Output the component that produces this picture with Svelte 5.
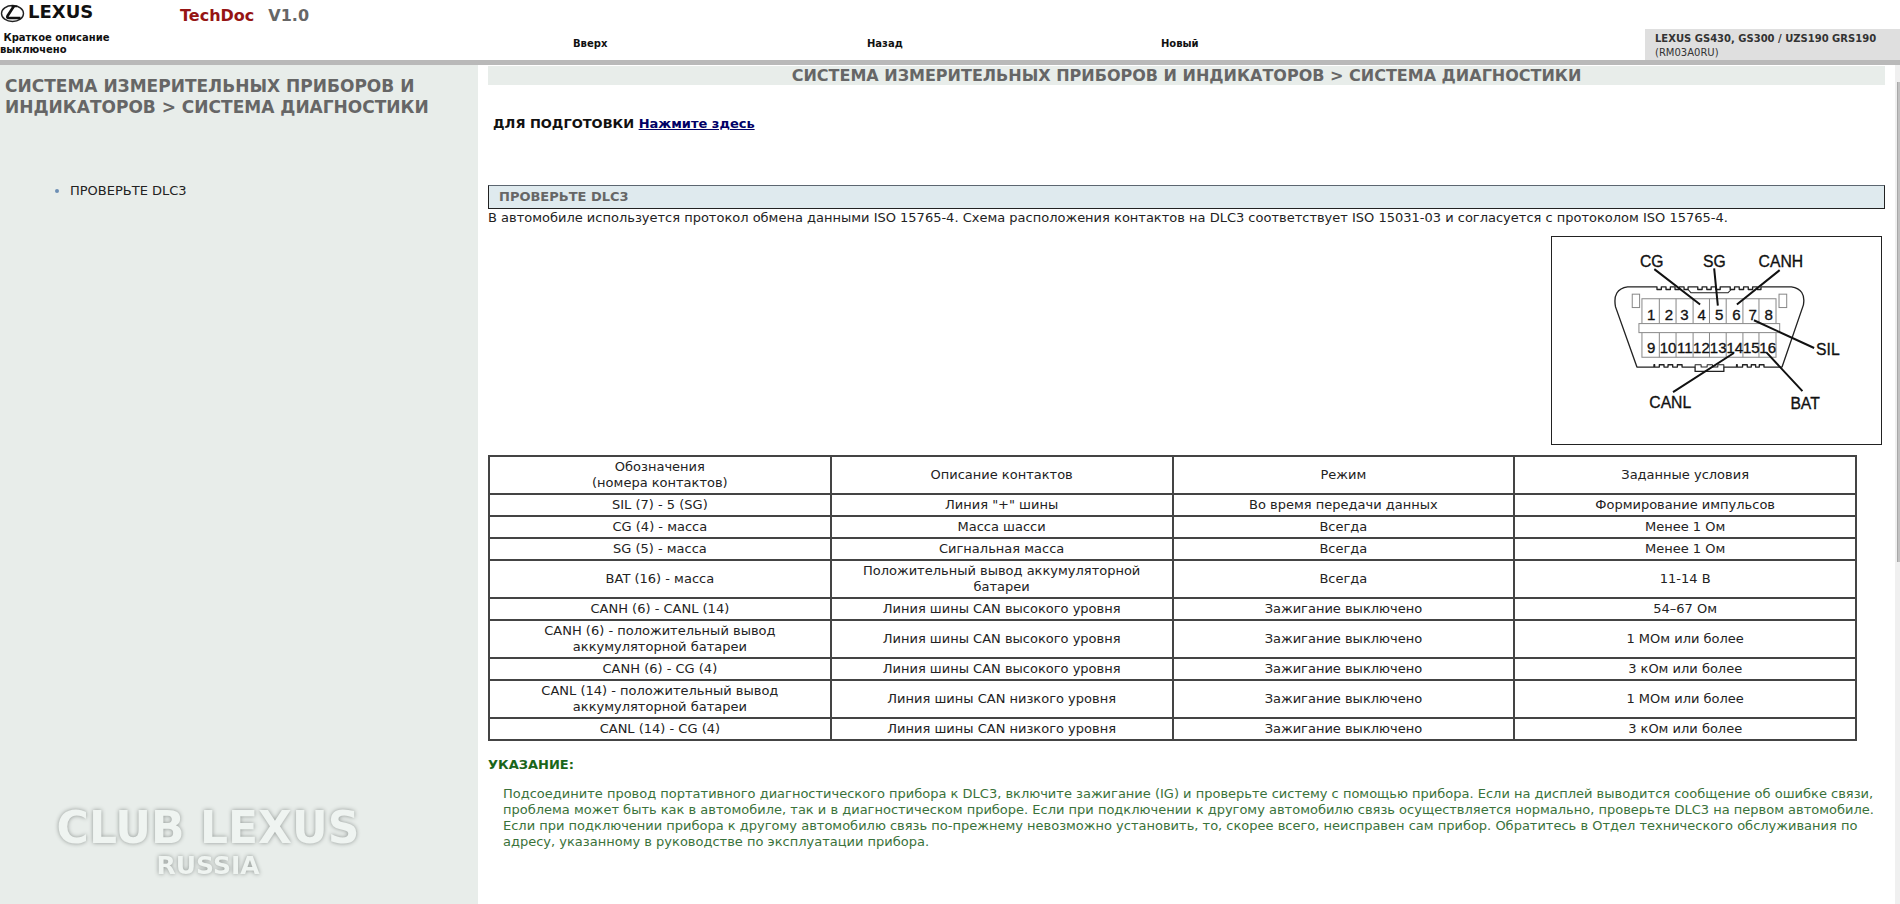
<script>
  const nav = ['Вверх', 'Назад', 'Новый'];
  const title = 'СИСТЕМА ИЗМЕРИТЕЛЬНЫХ ПРИБОРОВ И ИНДИКАТОРОВ > СИСТЕМА ДИАГНОСТИКИ';
  const heads = ['Обозначения\n(номера контактов)', 'Описание контактов', 'Режим', 'Заданные условия'];
  const rows = [
    ['SIL (7) - 5 (SG)', 'Линия "+" шины', 'Во время передачи данных', 'Формирование импульсов'],
    ['CG (4) - масса', 'Масса шасси', 'Всегда', 'Менее 1 Ом'],
    ['SG (5) - масса', 'Сигнальная масса', 'Всегда', 'Менее 1 Ом'],
    ['BAT (16) - масса', 'Положительный вывод аккумуляторной батареи', 'Всегда', '11-14 В'],
    ['CANH (6) - CANL (14)', 'Линия шины CAN высокого уровня', 'Зажигание выключено', '54–67 Ом'],
    ['CANH (6) - положительный вывод аккумуляторной батареи', 'Линия шины CAN высокого уровня', 'Зажигание выключено', '1 МОм или более'],
    ['CANH (6) - CG (4)', 'Линия шины CAN высокого уровня', 'Зажигание выключено', '3 кОм или более'],
    ['CANL (14) - положительный вывод аккумуляторной батареи', 'Линия шины CAN низкого уровня', 'Зажигание выключено', '1 МОм или более'],
    ['CANL (14) - CG (4)', 'Линия шины CAN низкого уровня', 'Зажигание выключено', '3 кОм или более']
  ];
  const topPins = [333, 386, 432, 484, 536, 588, 636, 684];
  const lowPins = [333, 383, 433, 483, 533, 583, 632, 681];
  const dividers = [357, 407, 458, 507, 557, 607, 655];
</script>

<div class="page">
  <header>
    <div class="brand">
      <svg class="logo" viewBox="0 0 100 24" role="img" aria-label="Lexus">
        <ellipse cx="12.5" cy="13.5" rx="11" ry="8" fill="none" stroke="#222" stroke-width="1.4" />
        <path d="M14 6 L7.5 16 Q6.5 18 9 18 L20.5 18" fill="none" stroke="#111" stroke-width="2.6" />
        <path d="M11.5 6.5 H17" fill="none" stroke="#111" stroke-width="1.5" />
        <text x="28" y="18">LEXUS</text>
      </svg>
      <div class="product"><span class="name">TechDoc</span><span>V1.0</span></div>
    </div>
    <nav>
      <a class="brief" href="#brief">&nbsp;Краткое описание выключено</a>
      {#each nav as item}
        <a href="#{item}">{item}</a>
      {/each}
      <div class="model"><b>LEXUS GS430, GS300 / UZS190 GRS190</b><span>(RM03A0RU)</span></div>
    </nav>
  </header>

  <div class="body">
    <aside>
      <h2>{title}</h2>
      <ul>
        <li><a href="#dlc3">ПРОВЕРЬТЕ DLC3</a></li>
      </ul>
      <svg class="club" viewBox="0 0 370 84" role="img" aria-label="Club Lexus Russia">
        <text class="big" x="185" y="43">CLUB LEXUS</text>
        <text class="small" x="185" y="74">RUSSIA</text>
      </svg>
    </aside>

    <main>
      <h1>{title}</h1>
      <p class="prep">ДЛЯ ПОДГОТОВКИ <a href="#prep">Нажмите здесь</a></p>
      <h3 id="dlc3">ПРОВЕРЬТЕ DLC3</h3>
      <p class="intro">В автомобиле используется протокол обмена данными ISO 15765-4. Схема расположения контактов на DLC3 соответствует ISO 15031-03 и согласуется с протоколом ISO 15765-4.</p>

      <figure>
        <svg viewBox="36 34 984 618" role="img" aria-label="DLC3">
          <g fill="none" stroke="#222" stroke-width="4" stroke-linejoin="round">
            <path d="M290 423 L226 243 Q216 190 262 183 H350 V191 H363 V183 H377 V191 H390 V183 H404 V191 H417 V183 H431 V191 H443 V183 H472 V191 H485 V183 H499 V191 H512 V183 H526 V191 H539 V183 H569 V191 H582 V183 H596 V191 H609 V183 H623 V191 H636 V183 H650 V191 H661 V183 H752 Q796 190 788 237 L724 423 H670 V416 H656 V423 H645 V416 H632 V423 H620 V416 H606 V423 H590 V416 H588 V423 H550 V436 H464 V423 H425 V416 H411 V423 H397 V416 H383 V423 H371 V416 H357 V423 H343 V416 H341 V423 Z" />
            <path d="M443 191 L452 201 H562 L572 191" stroke-width="3" />
            <path d="M464 423 V416 H482 V423 H500 V416 H516 V423 H532 V416 H550 V423" stroke-width="3" />
          </g>
          <g fill="none" stroke="#888" stroke-width="3">
            <rect x="276" y="205" width="22" height="40" />
            <rect x="715" y="205" width="23" height="40" />
            <path d="M305 293 V219 H706 V293 M305 320 V394 H706 V320" />
            {#each dividers as x}
              <path d="M{x} 219 V293 M{x} 320 V394" />
            {/each}
            <rect x="296" y="293" width="421" height="27" fill="#fff" />
          </g>
          <g class="pins">
            {#each topPins as x, i}
              <text {x} y="283">{i + 1}</text>
            {/each}
            {#each lowPins as x, i}
              <text {x} y="382">{i + 9}</text>
            {/each}
          </g>
          <path d="M342 130 L479 236 M521 128 L532 239 M717 133 L589 236 M640 283 L820 366 M398 498 L580 381 M678 380 L785 495" fill="none" stroke="#111" stroke-width="6" />
          <g class="labels">
            <text x="299" y="123">CG</text>
            <text x="488" y="123">SG</text>
            <text x="654" y="125">CANH</text>
            <text x="826" y="388">SIL</text>
            <text x="327" y="544">CANL</text>
            <text x="749" y="547">BAT</text>
          </g>
        </svg>
      </figure>

      <table>
        <thead>
          <tr>{#each heads as h}<th scope="col">{h}</th>{/each}</tr>
        </thead>
        <tbody>
          {#each rows as row}
            <tr>{#each row as cell}<td>{cell}</td>{/each}</tr>
          {/each}
        </tbody>
      </table>

      <h4>УКАЗАНИЕ:</h4>
      <p class="note">Подсоедините провод портативного диагностического прибора к DLC3, включите зажигание (IG) и проверьте систему с помощью прибора. Если на дисплей выводится сообщение об ошибке связи, проблема может быть как в автомобиле, так и в диагностическом приборе. Если при подключении к другому автомобилю связь осуществляется нормально, проверьте DLC3 на первом автомобиле. Если при подключении прибора к другому автомобилю связь по-прежнему невозможно установить, то, скорее всего, неисправен сам прибор. Обратитесь в Отдел технического обслуживания по адресу, указанному в руководстве по эксплуатации прибора.</p>
    </main>
    <div class="track"><div class="thumb"></div></div>
  </div>
</div>

<style>
  :global(body) { margin: 0; background: #fff; }
  .page {
    display: flex;
    flex-direction: column;
    min-height: 100vh;
    font: 13px/16px Verdana, "DejaVu Sans", sans-serif;
    color: #222;
  }
  h1, h2, h3, h4, p, ul, figure { margin: 0; padding: 0; }
  header { border-bottom: 5px solid #b9b9b9; }
  .brand { display: flex; height: 29px; }
  .logo { width: 100px; height: 24px; }
  .logo text { font: bold 18px "DejaVu Sans", sans-serif; fill: #111; }
  .product {
    display: flex;
    gap: 14px;
    padding: 6px 0 0 80px;
    font-size: 16px;
    line-height: 20px;
    font-weight: bold;
    color: #666;
  }
  .name { color: #961414; }
  nav {
    display: grid;
    grid-template-columns: 573fr 294fr 294fr 484fr 255fr;
    height: 31px;
    font-size: 10px;
    line-height: 12px;
  }
  nav a { color: #111; text-decoration: none; font-weight: bold; padding-top: 9px; }
  nav .brief { width: 124px; padding-top: 3px; }
  .model {
    display: flex;
    flex-direction: column;
    gap: 2px;
    padding: 4px 0 0 10px;
    background: #dfdfdf;
    color: #333;
    white-space: nowrap;
  }
  .body { display: flex; flex: 1; }
  aside {
    display: flex;
    flex-direction: column;
    box-sizing: border-box;
    flex: 0 0 478px;
    background: #e8edea;
  }
  h2 { padding: 11px 5px 0; font-size: 17px; line-height: 21px; color: #666; }
  ul { margin-top: 65px; padding-left: 70px; }
  li::marker { color: #6d8fb5; }
  li a { color: #222; text-decoration: none; }
  .club { width: 370px; height: 84px; margin: auto 0 20px 23px; }
  .club text {
    font-family: "DejaVu Sans", sans-serif;
    font-weight: bold;
    text-anchor: middle;
    fill: #eff4f1;
    filter: drop-shadow(0 0 2px #8f9592);
  }
  .club .big { font-size: 44px; }
  .club .small { font-size: 25px; }
  main { flex: 1; min-width: 0; padding: 1px 10px 0; }
  h1 {
    background: #e8edea;
    font-size: 16px;
    line-height: 19px;
    text-align: center;
    color: #666;
  }
  .prep { padding: 31px 5px 0; font-weight: bold; color: #111; }
  .prep a { color: #000066; }
  h3 {
    margin-top: 53px;
    padding: 3px 10px;
    border: 1px solid #222;
    border-top-color: #5c6670;
    background: #dfeaee;
    font-size: 13px;
    line-height: 16px;
    color: #666;
  }
  .intro { padding-top: 1px; }
  figure {
    box-sizing: border-box;
    width: 331px;
    margin: 10px 3px 0 auto;
    border: 1px solid #222;
  }
  figure svg { display: block; width: 100%; }
  .pins, .labels { font-family: "Liberation Sans", Arial, sans-serif; fill: #111; stroke: #111; stroke-width: 1; }
  .pins { font-size: 45px; text-anchor: middle; }
  .labels { font-size: 47px; }
  table {
    width: 98%;
    margin-top: 10px;
    border-collapse: collapse;
    table-layout: fixed;
    text-align: center;
  }
  th, td { border: 2px solid #444; padding: 2px 24px; font-weight: normal; white-space: pre-line; }
  h4 { margin-top: 16px; font-size: 13px; color: #1a661a; }
  .note { padding: 13px 0 0 15px; color: #3a723a; }
  .track { flex: 0 0 5px; background: #f0f0f0; }
  .thumb { height: 480px; margin: 17px 0 0 2px; background: #c1c1c1; border-left: 1px solid #a8a8a8; }
</style>
